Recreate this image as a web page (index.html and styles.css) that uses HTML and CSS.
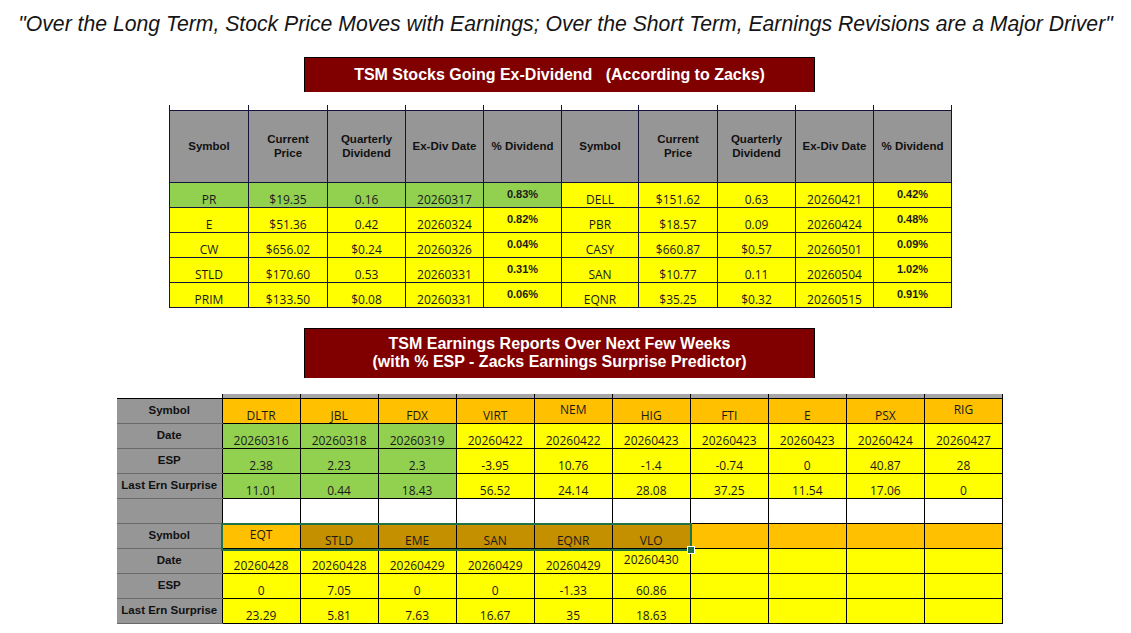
FILE: index.html
```html
<!DOCTYPE html>
<html>
<head>
<meta charset="utf-8">
<link rel="stylesheet" href="styles.css">
</head>
<body>
<div class="page">
  <h1 class="quote">"Over the Long Term, Stock Price Moves with Earnings; Over the Short Term, Earnings Revisions are a Major Driver"</h1>

  <div class="banner b1">TSM Stocks Going Ex-Dividend &nbsp;&nbsp;(According to Zacks)</div>

  <table class="divs">
    <colgroup>
      <col style="width:79px"><col style="width:79px"><col style="width:78px"><col style="width:78px"><col style="width:78px">
      <col style="width:77px"><col style="width:79px"><col style="width:78px"><col style="width:78px"><col style="width:78px">
    </colgroup>
    <tr class="tick"><td></td><td></td><td></td><td></td><td></td><td></td><td></td><td></td><td></td><td></td></tr>
    <tr class="head">
      <th>Symbol</th><th>Current<br>Price</th><th>Quarterly<br>Dividend</th><th>Ex-Div Date</th><th>% Dividend</th>
      <th>Symbol</th><th>Current<br>Price</th><th>Quarterly<br>Dividend</th><th>Ex-Div Date</th><th>% Dividend</th>
    </tr>
    <tr>
      <td class="g">PR</td><td class="g">$19.35</td><td class="g">0.16</td><td class="g">20260317</td><td class="g pct">0.83%</td>
      <td>DELL</td><td>$151.62</td><td>0.63</td><td>20260421</td><td class="pct">0.42%</td>
    </tr>
    <tr>
      <td>E</td><td>$51.36</td><td>0.42</td><td>20260324</td><td class="pct">0.82%</td>
      <td>PBR</td><td>$18.57</td><td>0.09</td><td>20260424</td><td class="pct">0.48%</td>
    </tr>
    <tr>
      <td>CW</td><td>$656.02</td><td>$0.24</td><td>20260326</td><td class="pct">0.04%</td>
      <td>CASY</td><td>$660.87</td><td>$0.57</td><td>20260501</td><td class="pct">0.09%</td>
    </tr>
    <tr>
      <td>STLD</td><td>$170.60</td><td>0.53</td><td>20260331</td><td class="pct">0.31%</td>
      <td>SAN</td><td>$10.77</td><td>0.11</td><td>20260504</td><td class="pct">1.02%</td>
    </tr>
    <tr>
      <td>PRIM</td><td>$133.50</td><td>$0.08</td><td>20260331</td><td class="pct">0.06%</td>
      <td>EQNR</td><td>$35.25</td><td>$0.32</td><td>20260515</td><td class="pct">0.91%</td>
    </tr>
  </table>

  <div class="banner b2">TSM Earnings Reports Over Next Few Weeks<br>(with % ESP - Zacks Earnings Surprise Predictor)</div>

  <div class="earn-wrap">
    <table class="earn">
      <colgroup>
        <col style="width:105px">
        <col style="width:78px"><col style="width:78px"><col style="width:78px"><col style="width:78px"><col style="width:78px">
        <col style="width:78px"><col style="width:78px"><col style="width:78px"><col style="width:78px"><col style="width:78px">
      </colgroup>
      <tr class="strip">
        <td class="blank"></td><td></td><td></td><td></td><td></td><td></td><td></td><td></td><td></td><td></td><td></td>
      </tr>
      <tr>
        <th>Symbol</th>
        <td class="o">DLTR</td><td class="o">JBL</td><td class="o">FDX</td><td class="o">VIRT</td><td class="o mid">NEM</td>
        <td class="o">HIG</td><td class="o">FTI</td><td class="o">E</td><td class="o">PSX</td><td class="o mid">RIG</td>
      </tr>
      <tr>
        <th>Date</th>
        <td class="g">20260316</td><td class="g">20260318</td><td class="g">20260319</td><td>20260422</td><td>20260422</td>
        <td>20260423</td><td>20260423</td><td>20260423</td><td>20260424</td><td>20260427</td>
      </tr>
      <tr>
        <th>ESP</th>
        <td class="g">2.38</td><td class="g">2.23</td><td class="g">2.3</td><td>-3.95</td><td>10.76</td>
        <td>-1.4</td><td>-0.74</td><td>0</td><td>40.87</td><td>28</td>
      </tr>
      <tr>
        <th>Last Ern Surprise</th>
        <td class="g">11.01</td><td class="g">0.44</td><td class="g">18.43</td><td>56.52</td><td>24.14</td>
        <td>28.08</td><td>37.25</td><td>11.54</td><td>17.06</td><td>0</td>
      </tr>
      <tr class="empty">
        <th></th>
        <td></td><td></td><td></td><td></td><td></td><td></td><td></td><td></td><td></td><td></td>
      </tr>
      <tr>
        <th>Symbol</th>
        <td class="o mid">EQT</td><td class="d">STLD</td><td class="d">EME</td><td class="d">SAN</td><td class="d">EQNR</td>
        <td class="d">VLO</td><td class="o"></td><td class="o"></td><td class="o"></td><td class="o"></td>
      </tr>
      <tr>
        <th>Date</th>
        <td>20260428</td><td>20260428</td><td>20260429</td><td>20260429</td><td>20260429</td>
        <td class="mid">20260430</td><td></td><td></td><td></td><td></td>
      </tr>
      <tr>
        <th>ESP</th>
        <td>0</td><td>7.05</td><td>0</td><td>0</td><td>-1.33</td>
        <td>60.86</td><td></td><td></td><td></td><td></td>
      </tr>
      <tr>
        <th>Last Ern Surprise</th>
        <td>23.29</td><td>5.81</td><td>7.63</td><td>16.67</td><td>35</td>
        <td>18.63</td><td></td><td></td><td></td><td></td>
      </tr>
    </table>
    <div class="selection"><span class="handle"></span></div>
  </div>
</div>
</body>
</html>
```

FILE: styles.css
```css
html, body {
  margin: 0;
  padding: 0;
  background: #ffffff;
}

.page {
  width: 1131px;
  height: 633px;
  overflow: hidden;
}

.quote {
  margin: 0;
  height: 57px;
  box-sizing: border-box;
  padding-top: 12px;
  font-family: "Liberation Sans", Arial, sans-serif;
  font-style: italic;
  font-weight: normal;
  font-size: 21.2px;
  line-height: 24px;
  color: #151515;
  text-align: center;
  white-space: nowrap;
}

.banner {
  margin-left: 304px;
  width: 511px;
  box-sizing: border-box;
  background: #800000;
  color: #ffffff;
  font-family: "Liberation Sans", Arial, sans-serif;
  font-weight: bold;
  font-size: 16px;
  text-align: center;
  border: 1px solid #000000;
  border-bottom: none;
}

.b1 {
  height: 35px;
  line-height: 34px;
  white-space: pre;
}

.b2 {
  height: 50px;
  line-height: 18px;
  padding-top: 6px;
  margin-top: 20px;
}

/* ---------- dividend table ---------- */
.divs {
  margin-left: 169px;
  margin-top: 13px;
  border-collapse: collapse;
  table-layout: fixed;
  width: 783px;
}

.divs tr {
  height: 25px;
}

.divs tr.tick {
  height: 5px;
}

.divs tr.head {
  height: 72px;
}

.divs td, .divs th {
  border: 1px solid #14143a;
  padding: 0;
  text-align: center;
  overflow: hidden;
  white-space: nowrap;
}

.divs .tick td {
  border-top: none;
  background: #ffffff;
}

.divs .head th {
  background: #969696;
  font-family: "Liberation Sans", Arial, sans-serif;
  font-weight: bold;
  font-size: 11.5px;
  line-height: 14px;
  color: #111111;
}

.divs td {
  background: #ffff00;
  font-family: "Open Sans", "Liberation Sans", sans-serif;
  font-size: 12px;
  line-height: 14px;
  color: #1a1a1a;
  vertical-align: bottom;
  padding-bottom: 0;
}

.divs td.g {
  background: #92d050;
}

.divs td.pct {
  vertical-align: top;
  padding-top: 4px;
  padding-bottom: 0;
  font-family: "Liberation Sans", Arial, sans-serif;
  font-weight: bold;
  font-size: 11px;
}

/* ---------- earnings table ---------- */
.earn-wrap {
  position: relative;
  margin-left: 117px;
  margin-top: 16px;
  width: 886px;
}

.earn {
  border-collapse: collapse;
  table-layout: fixed;
  width: 886px;
}

.earn tr {
  height: 25px;
}

.earn tr.strip {
  height: 5px;
}

.earn td, .earn th {
  border: 1px solid #000000;
  padding: 0;
  text-align: center;
  white-space: nowrap;
  overflow: hidden;
}

.earn th {
  background: #969696;
  font-family: "Liberation Sans", Arial, sans-serif;
  font-weight: bold;
  font-size: 11.5px;
  line-height: 14px;
  color: #111111;
  vertical-align: middle;
  padding-bottom: 3px;
  border-left: none;
  border-top-color: #6a6a6a;
  border-bottom-color: #6a6a6a;
}

.earn td {
  background: #ffff00;
  font-family: "Open Sans", "Liberation Sans", sans-serif;
  font-size: 12px;
  line-height: 14px;
  color: #1a1a1a;
  vertical-align: bottom;
  padding-bottom: 0;
}

.earn td.g {
  background: #92d050;
}

.earn td.o {
  background: #ffc000;
}

.earn td.d {
  background: #c49000;
}

.earn td.mid {
  vertical-align: middle;
  padding-bottom: 2px;
}

.earn .strip td {
  background: #a6a6a6;
  border-top: none;
  padding: 0;
}

.earn .strip td.blank {
  background: #ffffff;
  border-left: none;
}

.earn .empty td {
  background: #ffffff;
}

.selection {
  position: absolute;
  left: 104px;
  top: 129px;
  width: 467px;
  height: 24px;
  border: 2px solid #217346;
  box-sizing: content-box;
  pointer-events: none;
}

.selection .handle {
  position: absolute;
  right: -5px;
  bottom: -5px;
  width: 6px;
  height: 6px;
  background: #217346;
  border: 1px solid #ffffff;
}
```
